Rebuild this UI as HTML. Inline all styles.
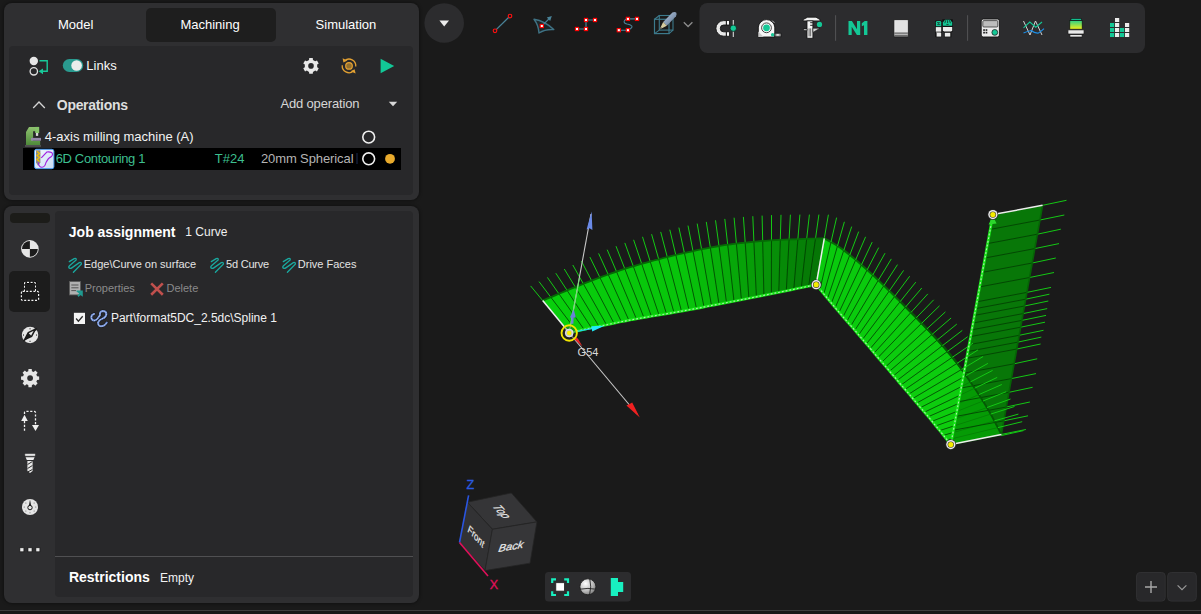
<!DOCTYPE html>
<html><head><meta charset="utf-8"><style>
html,body{margin:0;padding:0;width:1201px;height:614px;overflow:hidden;background:#1a1a1a;}
.t{position:absolute;white-space:pre;line-height:1;font-family:"Liberation Sans", sans-serif;}
.b{position:absolute;}
svg{position:absolute;left:0;top:0;}
</style></head><body>
<div class="b" style="left:4px;top:3px;width:414.5px;height:197px;background:#2f2f31;border-radius:8px;box-shadow:0 0 3px 1px rgba(0,0,0,0.35)"></div><div class="b" style="left:146px;top:8px;width:130px;height:34px;background:#1e1e1e;border-radius:5px;"></div><div class="b" style="left:9px;top:46px;width:404px;height:149px;background:#28282a;border-radius:4px;"></div><div class="b" style="left:4px;top:206px;width:414.5px;height:397px;background:#2f2f31;border-radius:8px;box-shadow:0 0 3px 1px rgba(0,0,0,0.35)"></div><div class="b" style="left:55px;top:211px;width:358px;height:386px;background:#28282a;border-radius:4px;"></div><div class="b" style="left:10px;top:213px;width:40px;height:10px;background:#1c1c19;border-radius:4px;"></div><div class="b" style="left:9px;top:271px;width:41px;height:41px;background:#1c1c1c;border-radius:5px;"></div><div class="b" style="left:0px;top:610px;width:1201px;height:1px;background:#3c3c3c;border-radius:0px;"></div><div class="b" style="left:0px;top:611px;width:1201px;height:3px;background:#161616;border-radius:0px;"></div><div class="t" style="left:57.9px;top:18.00px;font-size:13px;font-weight:400;color:#ffffff;">Model</div><div class="t" style="left:180.4px;top:18.00px;font-size:13px;font-weight:400;color:#ffffff;">Machining</div><div class="t" style="left:315.6px;top:18.00px;font-size:13px;font-weight:400;color:#ffffff;">Simulation</div><div class="t" style="left:86.3px;top:59.30px;font-size:13px;font-weight:400;color:#f8f8f8;">Links</div><div class="t" style="left:56.8px;top:97.95px;font-size:14px;font-weight:700;color:#dedede;letter-spacing:-0.3px">Operations</div><div class="t" style="left:280.4px;top:96.90px;font-size:13px;font-weight:400;color:#d6d6d6;letter-spacing:-0.15px">Add operation</div><div class="t" style="left:44.8px;top:129.80px;font-size:13px;font-weight:400;color:#f2f2f2;">4-axis milling machine (A)</div><div class="b" style="left:23px;top:148px;width:378px;height:22px;background:#000000;border-radius:0px;"></div><div class="t" style="left:55.7px;top:151.50px;font-size:13px;font-weight:400;color:#3dbf8f;letter-spacing:-0.35px">6D Contouring 1</div><div class="t" style="left:214.8px;top:151.50px;font-size:13px;font-weight:400;color:#3dbf8f;">T#24</div><div class="t" style="left:260.9px;top:151.50px;font-size:13px;font-weight:400;color:#b4b4b4;letter-spacing:-0.1px">20mm Spherical</div><div class="t" style="left:68.8px;top:225.05px;font-size:14px;font-weight:700;color:#ffffff;">Job assignment</div><div class="t" style="left:185.3px;top:226.04px;font-size:12px;font-weight:400;color:#f0f0f0;">1 Curve</div><div class="t" style="left:83.7px;top:259.09px;font-size:11px;font-weight:400;color:#e4e4e4;">Edge\Curve on surface</div><div class="t" style="left:226.0px;top:259.09px;font-size:11px;font-weight:400;color:#e4e4e4;letter-spacing:-0.2px">5d Curve</div><div class="t" style="left:297.8px;top:259.09px;font-size:11px;font-weight:400;color:#e4e4e4;">Drive Faces</div><div class="t" style="left:84.7px;top:282.69px;font-size:11px;font-weight:400;color:#8a8a8a;">Properties</div><div class="t" style="left:166.5px;top:282.69px;font-size:11px;font-weight:400;color:#8a8a8a;">Delete</div><div class="t" style="left:110.9px;top:311.94px;font-size:12px;font-weight:400;color:#f2f2f2;">Part\format5DC_2.5dc\Spline 1</div><div class="b" style="left:55px;top:556px;width:358px;height:1px;background:#505052;border-radius:0px;"></div><div class="t" style="left:68.9px;top:569.85px;font-size:14px;font-weight:700;color:#ffffff;">Restrictions</div><div class="t" style="left:160.1px;top:571.84px;font-size:12px;font-weight:400;color:#f2f2f2;">Empty</div><svg width="1201" height="614" viewBox="0 0 1201 614"><circle cx="33.8" cy="61" r="4.2" fill="#e6e6e6"/><circle cx="33.8" cy="71.3" r="3.7" fill="none" stroke="#e0e0e0" stroke-width="1.3"/><path d="M39.5,60.7 H47.2 V71.3 H42" fill="none" stroke="#18c99a" stroke-width="1.4"/><path d="M38.6,71.3 L43,68.4 L43,74.2 Z" fill="#18c99a"/><rect x="62.8" y="59" width="20.4" height="13" rx="6.5" fill="#2a9a8f"/><circle cx="76.6" cy="65.5" r="5.3" fill="#ececec"/><path d="M309.03,59.91 L309.24,57.99 L312.76,57.99 L312.97,59.91 L315.20,61.20 L316.97,60.42 L318.73,63.47 L317.17,64.61 L317.17,67.19 L318.73,68.33 L316.97,71.38 L315.20,70.60 L312.97,71.89 L312.76,73.81 L309.24,73.81 L309.03,71.89 L306.80,70.60 L305.03,71.38 L303.27,68.33 L304.83,67.19 L304.83,64.61 L303.27,63.47 L305.03,60.42 L306.80,61.20Z" fill="#e8e8e8"/><circle cx="311" cy="65.9" r="2.8" fill="#28282a"/><path d="M344.63,60.69 A6.8,6.8 0 0 1 355.77,66.49" fill="none" stroke="#e3a132" stroke-width="1.3"/><path d="M353.37,71.11 A6.8,6.8 0 0 1 342.23,65.31" fill="none" stroke="#e3a132" stroke-width="1.3"/><path d="M342.6,58.2 L343.4,62.6 L347.4,60.6 Z" fill="#e3a132"/><path d="M355.6,73.6 L354.6,69.2 L350.6,71.2 Z" fill="#e3a132"/><circle cx="349" cy="65.9" r="3.3" fill="#94702e" stroke="#e3a132" stroke-width="1.2"/><path d="M380.6,58.7 L394.2,66 L380.6,73.3 Z" fill="#12c897"/><path d="M33.2,108 L39,102 L44.8,108" fill="none" stroke="#d4d4d4" stroke-width="1.3"/><path d="M388.8,101.8 L397.2,101.8 L393,106.2 Z" fill="#d8d8d8"/><defs><linearGradient id="mg" x1="0" y1="0" x2="0" y2="1"><stop offset="0" stop-color="#8fc270"/><stop offset="1" stop-color="#4f8a3a"/></linearGradient><linearGradient id="og" x1="0" y1="0" x2="1" y2="1"><stop offset="0" stop-color="#f4f8ff"/><stop offset="1" stop-color="#c8dcf4"/></linearGradient></defs><rect x="25" y="145.2" width="16" height="1.5" fill="#5a5a5a"/><path d="M29,126.9 H39.1 V133 H35.4 V131.2 H33.1 V140.7 H40.2 V144.9 H26 V132.1 Z" fill="url(#mg)"/><rect x="35.4" y="126.9" width="3.7" height="6.1" fill="#86c46a"/><rect x="35.9" y="133" width="2.3" height="2.9" fill="#d8d8d8"/><rect x="31" y="137.9" width="10" height="2.8" fill="#9488a8"/><rect x="34.5" y="149.3" width="19.4" height="19.4" rx="2" fill="url(#og)" stroke="#4a9cf0" stroke-width="1"/><path d="M36,150.3 H40.4 V162.5 L38.2,166 L36,162.5 Z" fill="#8a8a8a"/><path d="M37,151.5 L39.6,153.5 L37,155.5 L39.6,157.5 L37,159.5 L39.6,161.5" fill="none" stroke="#f0c000" stroke-width="1.2"/><path d="M38.3,162.5 Q39,167.5 42,167.3 Q45,167 46,162.5 Q48,158 51.5,156.5 Q53.5,154 51.5,152.5 Q49.5,151.5 46.8,152 L41.3,157.8" fill="none" stroke="#a020e0" stroke-width="1.1"/><circle cx="368.7" cy="137.1" r="5.9" fill="none" stroke="#f0f0f0" stroke-width="1.6"/><circle cx="368.7" cy="158.8" r="5.9" fill="none" stroke="#f0f0f0" stroke-width="1.6"/><circle cx="390" cy="158.8" r="4.9" fill="#e8aa2c"/><rect x="356.5" y="153" width="1" height="11" fill="#1a2a50"/><circle cx="29.9" cy="248.9" r="8.8" fill="#e6e6e6"/><path d="M29.9,248.9 V241 A7.9,7.9 0 0 0 22,248.9 Z" fill="#1b1b1b"/><path d="M29.9,248.9 V256.8 A7.9,7.9 0 0 0 37.8,248.9 Z" fill="#1b1b1b"/><path d="M24.5,291.4 V283.6 Q24.5,282.4 25.7,282.4 H34.3 Q35.5,282.4 35.5,283.6 V291.4" fill="none" stroke="#000" stroke-width="2.6" stroke-dasharray="2 1.6"/><path d="M24.5,291.4 V283.6 Q24.5,282.4 25.7,282.4 H34.3 Q35.5,282.4 35.5,283.6 V291.4" fill="none" stroke="#f4f4f4" stroke-width="1.2" stroke-dasharray="2 1.6"/><rect x="21.4" y="291.4" width="17.2" height="9" rx="1.2" fill="none" stroke="#f4f4f4" stroke-width="1.2" stroke-dasharray="2 1.6"/><circle cx="30.05" cy="335.05" r="8.2" fill="#e6e6e6"/><path d="M23.4,341.2 L36.8,328.5" stroke="#1b1b1b" stroke-width="1.4"/><path d="M24.6,339.6 L28.3,332.7 L35.4,329.2 L31.7,336.2 Z" fill="#e6e6e6" stroke="#1b1b1b" stroke-width="1.5" stroke-linejoin="round"/><path d="M24.6,339.6 L28.3,332.7 L31.7,336.2 Z" fill="#1b1b1b"/><path d="M29.3,328.8 H30.8 M29.3,341.3 H30.8 M23.5,334.3 V335.8 M36.6,334.3 V335.8" stroke="#444" stroke-width="0.9"/><path d="M28.27,371.14 L28.48,369.04 L31.72,369.04 L31.93,371.14 L33.73,371.88 L35.35,370.55 L37.65,372.85 L36.32,374.47 L37.06,376.27 L39.16,376.48 L39.16,379.72 L37.06,379.93 L36.32,381.73 L37.65,383.35 L35.35,385.65 L33.73,384.32 L31.93,385.06 L31.72,387.16 L28.48,387.16 L28.27,385.06 L26.47,384.32 L24.85,385.65 L22.55,383.35 L23.88,381.73 L23.14,379.93 L21.04,379.72 L21.04,376.48 L23.14,376.27 L23.88,374.47 L22.55,372.85 L24.85,370.55 L26.47,371.88Z" fill="#e6e6e6"/><circle cx="30.1" cy="378.1" r="2.9" fill="#2f2f31"/><path d="M24.5,421 V431" fill="none" stroke="#f0f0f0" stroke-width="1.3" stroke-dasharray="2.2 1.6"/><path d="M21.2,421 L24.5,414.8 L27.8,421 Z" fill="#f0f0f0"/><path d="M24.5,414 V412.6 Q24.5,411.4 25.7,411.4 H34.3 Q35.5,411.4 35.5,412.6 V425" fill="none" stroke="#f0f0f0" stroke-width="1.3" stroke-dasharray="2.2 1.6"/><path d="M32,425 L35.5,431 L39,425 Z" fill="#f0f0f0"/><rect x="24.8" y="453.6" width="10.6" height="2.6" rx="0.6" fill="#f0f0f0" stroke="#111" stroke-width="0.5"/><path d="M25.6,457.2 H34.6 L33.4,460 H26.8 Z" fill="#f0f0f0"/><path d="M27.4,461 H32.6 V471 L30,473 L27.4,471 Z" fill="#e8e8e8"/><path d="M27.6,464.5 L32.4,461.5 M27.6,468.5 L32.4,465.5 M27.6,472 L32.4,469.5" stroke="#2a2a2a" stroke-width="1"/><circle cx="30" cy="507" r="8" fill="#e6e6e6"/><path d="M28.6,507 L30,499.5 L31.4,507 Z" fill="#1b1b1b"/><circle cx="30" cy="507.6" r="2.2" fill="#e6e6e6" stroke="#1b1b1b" stroke-width="1"/><circle cx="34.10" cy="502.90" r="0.5" fill="#555"/><circle cx="35.80" cy="507.00" r="0.5" fill="#555"/><circle cx="34.10" cy="511.10" r="0.5" fill="#555"/><circle cx="30.00" cy="512.80" r="0.5" fill="#555"/><circle cx="25.90" cy="511.10" r="0.5" fill="#555"/><circle cx="24.20" cy="507.00" r="0.5" fill="#555"/><circle cx="25.90" cy="502.90" r="0.5" fill="#555"/><rect x="19.9" y="547.8" width="4" height="4" fill="#ececec" stroke="#111" stroke-width="0.6"/><rect x="28.0" y="547.8" width="4" height="4" fill="#ececec" stroke="#111" stroke-width="0.6"/><rect x="35.9" y="547.8" width="4" height="4" fill="#ececec" stroke="#111" stroke-width="0.6"/><path transform="translate(0.0,0.0)" d="M69.3,261.6 L74.2,258.6 Q76.5,257.8 76.2,260 L69.5,265.8 Q67.8,267.6 70,268.4 Q70.8,268.6 71.8,267.9 L79.3,262.6 Q81.8,262 81.3,264.2 L73.4,272.2" fill="none" stroke="#1aa9a0" stroke-width="1.3" stroke-linecap="round"/><path transform="translate(142.0,0.0)" d="M69.3,261.6 L74.2,258.6 Q76.5,257.8 76.2,260 L69.5,265.8 Q67.8,267.6 70,268.4 Q70.8,268.6 71.8,267.9 L79.3,262.6 Q81.8,262 81.3,264.2 L73.4,272.2" fill="none" stroke="#1aa9a0" stroke-width="1.3" stroke-linecap="round"/><path transform="translate(214.0,0.0)" d="M69.3,261.6 L74.2,258.6 Q76.5,257.8 76.2,260 L69.5,265.8 Q67.8,267.6 70,268.4 Q70.8,268.6 71.8,267.9 L79.3,262.6 Q81.8,262 81.3,264.2 L73.4,272.2" fill="none" stroke="#1aa9a0" stroke-width="1.3" stroke-linecap="round"/><rect x="69.5" y="281.5" width="11" height="13.4" fill="#b0b0b0" stroke="#5a5a5a" stroke-width="0.8"/><path d="M71.3,285 H78.5 M71.3,287.8 H78.5 M71.3,290.6 H76" stroke="#555" stroke-width="1"/><path d="M76.5,290.5 H82.8 V296.8 L80.4,295 L78.6,297 L77.4,295.6 L79.2,293.6 L76.5,291.6 Z" fill="#1f9a90"/><path d="M151.2,283.4 L162.8,294.8 M162.8,283.4 L151.2,294.8" stroke="#c0504d" stroke-width="2.6"/><rect x="73.9" y="312.8" width="11.1" height="11.2" fill="#f4f4f4"/><path d="M76.1,318.5 L78.4,321.2 L82.7,316.3" fill="none" stroke="#2a2a2a" stroke-width="1.3"/><path d="M94.2,313.9 Q91.2,314.6 91.3,317.6 Q91.8,320.8 94.5,320.5 Q96.5,320 97.6,318.5 L99.9,315.2 Q99.6,311.4 102.7,311.1 Q106.3,311.2 106.4,314.2 Q106,317.6 102.5,318.6 Q99.2,319.6 98.1,322.4 Q97.9,326.1 100.9,326.3 Q104.6,326.3 106.8,322.6" fill="none" stroke="#151515" stroke-width="3" stroke-linecap="round"/><path d="M94.2,313.9 Q91.2,314.6 91.3,317.6 Q91.8,320.8 94.5,320.5 Q96.5,320 97.6,318.5 L99.9,315.2 Q99.6,311.4 102.7,311.1 Q106.3,311.2 106.4,314.2 Q106,317.6 102.5,318.6 Q99.2,319.6 98.1,322.4 Q97.9,326.1 100.9,326.3 Q104.6,326.3 106.8,322.6" fill="none" stroke="#6f8fd8" stroke-width="2" stroke-linecap="round"/><path d="M94.2,313.9 Q91.2,314.6 91.3,317.6 Q91.8,320.8 94.5,320.5 Q96.5,320 97.6,318.5 L99.9,315.2 Q99.6,311.4 102.7,311.1 Q106.3,311.2 106.4,314.2 Q106,317.6 102.5,318.6 Q99.2,319.6 98.1,322.4 Q97.9,326.1 100.9,326.3 Q104.6,326.3 106.8,322.6" fill="none" stroke="#ffffff" stroke-width="0.9" stroke-dasharray="0.8 1.1" opacity="0.85"/></svg><svg width="1201" height="614" viewBox="0 0 1201 614"><circle cx="444.2" cy="23" r="19.8" fill="#2c2c2e"/><path d="M439.4,20.6 L449,20.6 L444.2,26.4 Z" fill="#ececec"/><path d="M496.2,29.6 L508.8,17.2" stroke="#4a8398" stroke-width="1.3"/><circle cx="495" cy="30.8" r="1.8" fill="none" stroke="#ff1010" stroke-width="1.15"/><circle cx="510" cy="16" r="1.8" fill="none" stroke="#ff1010" stroke-width="1.15"/><path d="M534,19.2 Q545,21 553.8,29.5 Q545,29 539,33 Q538.5,25 534,19.2 Z" fill="#1e2629" stroke="#3f7284" stroke-width="1.4" stroke-linejoin="round"/><path d="M541.8,26 L550,17.8" stroke="#4a8398" stroke-width="1.2"/><path d="M551.8,16 L546.8,17.6 L550.2,21 Z" fill="#4a8398"/><rect x="540.2" y="24.4" width="3.2" height="3.2" fill="#ffffff" stroke="#ff0000" stroke-width="1.1"/><path d="M577,29 H586 V20 H595" fill="none" stroke="#4a8398" stroke-width="1.2"/><rect x="575.4" y="27.4" width="3.2" height="3.2" fill="#ffffff" stroke="#ff0000" stroke-width="1.1"/><rect x="584.4" y="27.4" width="3.2" height="3.2" fill="#ffffff" stroke="#ff0000" stroke-width="1.1"/><rect x="584.4" y="18.4" width="3.2" height="3.2" fill="#ffffff" stroke="#ff0000" stroke-width="1.1"/><rect x="593.4" y="18.4" width="3.2" height="3.2" fill="#ffffff" stroke="#ff0000" stroke-width="1.1"/><path d="M618.8,30.2 H627.9 Q633,27.5 631.8,26 Q630.5,24.5 627,24 Q623,23 624.5,20.5 Q625.5,19 627.9,18.9 H637" fill="none" stroke="#4a8398" stroke-width="1.1"/><rect x="617.2" y="28.6" width="3.2" height="3.2" fill="#ffffff" stroke="#ff0000" stroke-width="1.1"/><rect x="626.3" y="28.6" width="3.2" height="3.2" fill="#ffffff" stroke="#ff0000" stroke-width="1.1"/><rect x="626.3" y="17.3" width="3.2" height="3.2" fill="#ffffff" stroke="#ff0000" stroke-width="1.1"/><rect x="635.4" y="17.3" width="3.2" height="3.2" fill="#ffffff" stroke="#ff0000" stroke-width="1.1"/><rect x="654.5" y="19.3" width="14.5" height="14.3" fill="none" stroke="#3c7a8c" stroke-width="1.2"/><rect x="659.3" y="15.5" width="13.7" height="14.6" fill="none" stroke="#3c7a8c" stroke-width="1.1"/><path d="M654.5,19.3 L659.3,15.5 M669,19.3 L673,15.5 M654.5,33.6 L659.3,30.1 M669,33.6 L673,30.1" stroke="#3c7a8c" stroke-width="1.1"/><defs><linearGradient id="pg" x1="0" y1="0" x2="1" y2="1"><stop offset="0" stop-color="#b8c8dc"/><stop offset="0.5" stop-color="#8a9eb8"/><stop offset="1" stop-color="#56687e"/></linearGradient></defs><path d="M663.2,22.1 L672.4,12.6 Q674.6,11.2 676.2,12.6 Q677.2,14.4 676,16.2 L666.8,25.7 Z" fill="url(#pg)"/><path d="M663.2,22.1 L666.8,25.7 L659.5,29.5 Z" fill="#d6ccA0"/><path d="M661,27 L659.6,29.4 L662,28.2 Z" fill="#444"/><path d="M683.8,22.3 L688.1,26.5 L692.4,22.3" fill="none" stroke="#8c8c8c" stroke-width="1.3"/><rect x="699.5" y="3" width="445.5" height="50" rx="8" fill="#2c2c2e"/><path d="M726.3,20.6 H723.7 A7.8,7.8 0 0 0 723.7,36.2 H726.3 V31.8 H723.7 A3.4,3.4 0 0 1 723.7,25 H726.3 Z" fill="#e8e8e8" stroke="#111" stroke-width="0.9"/><rect x="726.6" y="20.6" width="2.8" height="4.4" fill="#fafafa" stroke="#111" stroke-width="0.8"/><rect x="726.6" y="31.8" width="2.8" height="4.4" fill="#fafafa" stroke="#111" stroke-width="0.8"/><path d="M733.3,20 V37" stroke="#d8d8d8" stroke-width="1.1"/><circle cx="733.3" cy="28.2" r="3.2" fill="#14c896" stroke="#111" stroke-width="0.7"/><path d="M758.3,37 V27 A8.3,8.3 0 0 1 774.8,27 V37 Z" fill="#f6f6f6" stroke="#111" stroke-width="0.9"/><path d="M758.3,37 V31.6 L763.8,37 Z" fill="#c8c8c8"/><path d="M772.2,20.6 L774.4,22.8" stroke="#bbb" stroke-width="1"/><circle cx="766.5" cy="27.8" r="4.9" fill="none" stroke="#333" stroke-width="0.9"/><circle cx="766.5" cy="27.8" r="3.4" fill="#14c896"/><rect x="775" y="33.2" width="6" height="3.6" fill="#9a9a9a" stroke="#111" stroke-width="0.6"/><rect x="776.6" y="34.2" width="2.2" height="1.4" fill="#eee"/><circle cx="772.6" cy="34.8" r="1.7" fill="#14c896"/><path d="M803,20.9 L803.4,19.4 L807.6,17.2 H816 L820,19.6 V20.9 Z" fill="#f0f0f0" stroke="#111" stroke-width="0.8" stroke-linejoin="round"/><rect x="807" y="20.9" width="5.9" height="17.3" fill="#f4f4f4" stroke="#111" stroke-width="0.8"/><path d="M810.2,22.7 H812.9 M810.2,25.3 H812.9" stroke="#111" stroke-width="0.9"/><path d="M803.2,28.9 H807 V30.6 H804 Z" fill="#dcdcdc" stroke="#111" stroke-width="0.6"/><path d="M812.9,28.2 H820 L812.9,32.4 Z" fill="#d4d4d4" stroke="#111" stroke-width="0.6" stroke-linejoin="round"/><path d="M809.1,28.4 V36.4 M810.7,28.4 V36.4" stroke="#222" stroke-width="0.7"/><circle cx="819.5" cy="24.4" r="2.6" fill="#14c896"/><rect x="835" y="15.2" width="1.1" height="25.6" fill="#4f4f51"/><rect x="967" y="15.2" width="1.1" height="25.6" fill="#4f4f51"/><path d="M848.5,35.1 V20.9 H851.9 L857,29.2 V20.9 H860.2 V35.1 H856.9 L851.7,26.8 V35.1 Z" fill="#14c896"/><path d="M864,35.1 V25.2 L861.8,26.3 V23.3 L864.7,20.9 H867.4 V35.1 Z" fill="#14c896"/><rect x="893.9" y="19.7" width="14.4" height="17.1" rx="0.8" fill="#f4f4f4" stroke="#111" stroke-width="0.8"/><rect x="895.2" y="21" width="11.8" height="11.2" fill="#e2e2e2"/><path d="M894.4,33.1 H907.8 M894.4,35.2 H907.8" stroke="#1a1a1a" stroke-width="0.9"/><rect x="935.2" y="20.4" width="6.6" height="16.8" rx="0.8" fill="#111"/><path d="M935.9,26.2 V22.2 Q935.9,20.9 937.4,20.9 H939.8 Q941.2,20.9 941.2,22.2 V26.2 Z" fill="#14c896"/><path d="M937,22.6 H939.6 L937.6,24.6 H940.2" fill="none" stroke="#1a3a30" stroke-width="0.8"/><rect x="935.8" y="27.1" width="5.4" height="4.6" fill="#ececec"/><rect x="936.2" y="31.6" width="4.6" height="1.2" fill="#9a9a9a"/><rect x="936.6" y="32.9" width="4.6" height="3.7" fill="#ececec"/><path d="M942.3,19.2 H952.8 V31.4 L951.4,32.3 V37.2 H944.2 V32.3 L942.3,31.4 Z" fill="#111"/><path d="M942.9,25.8 V22.5 L945,19.8 H950.2 L952.2,22.5 V25.8 Z" fill="#14c896"/><path d="M945.8,20.2 L944.8,23.2 M947.6,20.2 V23 M949.4,20.2 L950.4,23.2 M946.4,24.4 H948.6" stroke="#112a22" stroke-width="0.8"/><path d="M942.9,26.9 H952.2 V30.8 L951,31.6 H944.2 L942.9,30.8 Z" fill="#ececec"/><rect x="944.8" y="32.8" width="5.5" height="3.8" fill="#ececec"/><rect x="981.2" y="19" width="18.2" height="18" rx="2" fill="#ececec" stroke="#111" stroke-width="0.9"/><rect x="982.8" y="20.6" width="15" height="6.4" rx="1" fill="#bdbdbd" stroke="#222" stroke-width="0.7"/><rect x="983.2" y="29.2" width="1.7" height="1.7" fill="#222"/><rect x="985.6" y="29.2" width="1.7" height="1.7" fill="#222"/><rect x="983.2" y="31.8" width="1.7" height="1.7" fill="#222"/><rect x="985.6" y="31.8" width="1.7" height="1.7" fill="#222"/><circle cx="994.8" cy="32.4" r="2.9" fill="#14c896" stroke="#222" stroke-width="0.8"/><path d="M1023.5,21 L1030,35 L1035.5,21 L1042,35" fill="none" stroke="#d4d4d4" stroke-width="1"/><path d="M1023.5,27.8 L1029.8,22 L1035.8,27.2 L1042,22" fill="none" stroke="#14c896" stroke-width="1.1"/><path d="M1023.5,33 Q1027,31.5 1031,30.5 Q1035,33.5 1038.5,33 Q1041.5,31 1044,28.6" fill="none" stroke="#1c8fe8" stroke-width="1.2"/><defs><linearGradient id="yg" x1="0" y1="0" x2="0" y2="1"><stop offset="0" stop-color="#2ccf86"/><stop offset="1" stop-color="#f2ee1a"/></linearGradient></defs><rect x="1071" y="18.6" width="10.2" height="1.6" fill="#14c896" stroke="#111" stroke-width="0.5"/><rect x="1069.8" y="20.6" width="12.4" height="8.6" fill="url(#yg)" stroke="#111" stroke-width="0.7"/><rect x="1067.9" y="29.8" width="16.2" height="4.3" rx="0.8" fill="#eaeaea" stroke="#111" stroke-width="0.8"/><rect x="1069.9" y="34.7" width="12.2" height="2.3" fill="#f2f2f2" stroke="#111" stroke-width="0.7"/><rect x="1110" y="23" width="4.2" height="4" fill="#14c896"/><rect x="1110" y="28" width="4.2" height="4" fill="#14c896"/><rect x="1110" y="33" width="4.2" height="4" fill="#14c896"/><rect x="1115" y="18" width="4.2" height="4" fill="#ececec"/><rect x="1115" y="23" width="4.2" height="4" fill="#ececec"/><rect x="1115" y="28" width="4.2" height="4" fill="#ececec"/><rect x="1115" y="33" width="4.2" height="4" fill="#ececec"/><rect x="1120" y="28" width="4.2" height="4" fill="#14c896"/><rect x="1120" y="33" width="4.2" height="4" fill="#14c896"/><rect x="1125" y="23" width="4.2" height="4" fill="#ececec"/><rect x="1125" y="28" width="4.2" height="4" fill="#ececec"/><rect x="1125" y="33" width="4.2" height="4" fill="#ececec"/><rect x="545" y="572" width="86" height="29.6" rx="3.5" fill="#2c2c2e"/><path d="M552.2,583 V579.3 H556 M564.2,579.3 H568 V583 M568,591.3 V595 H564.2 M556,595 H552.2 V591.3" fill="none" stroke="#18f0c0" stroke-width="2.2"/><rect x="555.8" y="582.7" width="8.6" height="8.4" fill="#ffffff" stroke="#222" stroke-width="0.8"/><defs><radialGradient id="sg" cx="0.35" cy="0.3" r="0.8"><stop offset="0" stop-color="#ffffff"/><stop offset="0.6" stop-color="#b8b8b8"/><stop offset="1" stop-color="#707070"/></radialGradient></defs><circle cx="587.9" cy="586.8" r="8" fill="url(#sg)" stroke="#1a1a1a" stroke-width="0.8"/><path d="M580,589.2 Q588,587.6 595.8,589.2 M589.8,579 Q591.8,586.8 589.6,594.6" fill="none" stroke="#222" stroke-width="0.9"/><path d="M610.8,577.9 H618 V582 H623.2 V592 H618 V596 H610.8 Z" fill="#18f0c0"/><rect x="1136.6" y="572.5" width="28.6" height="28.6" rx="3.5" fill="#28282a" stroke="#303032" stroke-width="1"/><rect x="1167.7" y="572.5" width="28.6" height="28.6" rx="3.5" fill="#28282a" stroke="#303032" stroke-width="1"/><path d="M1145,587 H1157 M1151,581 V593" stroke="#a8a8a8" stroke-width="1.4"/><path d="M1177.6,585.4 L1182,589.6 L1186.4,585.4" fill="none" stroke="#999" stroke-width="1.2"/></svg><svg width="1201" height="614" viewBox="0 0 1201 614"><polygon points="569.2,332.8 542.7,300.6 550.8,297.2 576.6,331.1" fill="#08cf0c" stroke="#08cf0c" stroke-width="0.5"/><polygon points="576.6,331.1 550.8,297.2 558.9,293.8 584.1,329.5" fill="#08ce0c" stroke="#08ce0c" stroke-width="0.5"/><polygon points="584.1,329.5 558.9,293.8 567.1,290.4 591.5,327.9" fill="#08ce0c" stroke="#08ce0c" stroke-width="0.5"/><polygon points="591.5,327.9 567.1,290.4 575.3,287.1 599.0,326.4" fill="#08cd0c" stroke="#08cd0c" stroke-width="0.5"/><polygon points="599.0,326.4 575.3,287.1 583.4,283.9 606.5,324.8" fill="#08cc0c" stroke="#08cc0c" stroke-width="0.5"/><polygon points="606.5,324.8 583.4,283.9 591.6,280.7 614.0,323.3" fill="#08cc0c" stroke="#08cc0c" stroke-width="0.5"/><polygon points="614.0,323.3 591.6,280.7 599.9,277.5 621.4,321.8" fill="#08cb0c" stroke="#08cb0c" stroke-width="0.5"/><polygon points="621.4,321.8 599.9,277.5 608.2,274.5 628.9,320.3" fill="#08ca0c" stroke="#08ca0c" stroke-width="0.5"/><polygon points="628.9,320.3 608.2,274.5 616.5,271.6 636.4,318.9" fill="#08ca0c" stroke="#08ca0c" stroke-width="0.5"/><polygon points="636.4,318.9 616.5,271.6 624.8,268.8 643.9,317.6" fill="#08c90b" stroke="#08c90b" stroke-width="0.5"/><polygon points="643.9,317.6 624.8,268.8 633.3,266.3 651.4,316.3" fill="#08c80b" stroke="#08c80b" stroke-width="0.5"/><polygon points="651.4,316.3 633.3,266.3 641.7,263.8 659.0,315.0" fill="#08c70b" stroke="#08c70b" stroke-width="0.5"/><polygon points="659.0,315.0 641.7,263.8 650.2,261.5 666.5,313.8" fill="#08c70b" stroke="#08c70b" stroke-width="0.5"/><polygon points="666.5,313.8 650.2,261.5 658.7,259.2 674.0,312.5" fill="#08c60b" stroke="#08c60b" stroke-width="0.5"/><polygon points="674.0,312.5 658.7,259.2 667.3,257.1 681.5,311.2" fill="#08c50b" stroke="#08c50b" stroke-width="0.5"/><polygon points="681.5,311.2 667.3,257.1 675.8,255.0 689.0,309.9" fill="#08c50b" stroke="#08c50b" stroke-width="0.5"/><polygon points="689.0,309.9 675.8,255.0 684.4,253.0 696.5,308.5" fill="#08c40b" stroke="#08c40b" stroke-width="0.5"/><polygon points="696.5,308.5 684.4,253.0 693.0,251.1 704.0,307.0" fill="#08bf0b" stroke="#08bf0b" stroke-width="0.5"/><polygon points="704.0,307.0 693.0,251.1 701.6,249.3 711.5,305.6" fill="#08ba0a" stroke="#08ba0a" stroke-width="0.5"/><polygon points="711.5,305.6 701.6,249.3 710.3,247.6 719.0,304.1" fill="#08b50a" stroke="#08b50a" stroke-width="0.5"/><polygon points="719.0,304.1 710.3,247.6 719.0,246.0 726.5,302.7" fill="#08b00a" stroke="#08b00a" stroke-width="0.5"/><polygon points="726.5,302.7 719.0,246.0 727.7,244.7 734.0,301.2" fill="#07ac09" stroke="#07ac09" stroke-width="0.5"/><polygon points="734.0,301.2 727.7,244.7 736.4,243.6 741.4,299.8" fill="#07a709" stroke="#07a709" stroke-width="0.5"/><polygon points="741.4,299.8 736.4,243.6 745.2,242.6 748.9,298.3" fill="#07a209" stroke="#07a209" stroke-width="0.5"/><polygon points="748.9,298.3 745.2,242.6 753.9,241.8 756.4,296.9" fill="#079d08" stroke="#079d08" stroke-width="0.5"/><polygon points="756.4,296.9 753.9,241.8 762.7,241.0 763.9,295.4" fill="#079808" stroke="#079808" stroke-width="0.5"/><polygon points="763.9,295.4 762.7,241.0 771.5,240.3 771.4,293.9" fill="#079308" stroke="#079308" stroke-width="0.5"/><polygon points="771.4,293.9 771.5,240.3 780.3,239.8 778.8,292.3" fill="#078e08" stroke="#078e08" stroke-width="0.5"/><polygon points="778.8,292.3 780.3,239.8 789.1,239.5 786.3,290.8" fill="#068a07" stroke="#068a07" stroke-width="0.5"/><polygon points="786.3,290.8 789.1,239.5 797.9,239.1 793.8,289.3" fill="#068507" stroke="#068507" stroke-width="0.5"/><polygon points="793.8,289.3 797.9,239.1 806.7,238.8 801.3,287.8" fill="#068007" stroke="#068007" stroke-width="0.5"/><polygon points="801.3,287.8 806.7,238.8 815.5,238.6 808.7,286.2" fill="#067b06" stroke="#067b06" stroke-width="0.5"/><polygon points="808.7,286.2 815.5,238.6 824.3,238.3 816.2,284.7" fill="#067606" stroke="#067606" stroke-width="0.5"/><line x1="576.6" y1="331.1" x2="550.8" y2="297.2" stroke="#023c02" stroke-width="0.75"/><line x1="584.1" y1="329.5" x2="558.9" y2="293.8" stroke="#023c02" stroke-width="0.75"/><line x1="591.5" y1="327.9" x2="567.1" y2="290.4" stroke="#023c02" stroke-width="0.75"/><line x1="599.0" y1="326.4" x2="575.3" y2="287.1" stroke="#023c02" stroke-width="0.75"/><line x1="606.5" y1="324.8" x2="583.4" y2="283.9" stroke="#023c02" stroke-width="0.75"/><line x1="614.0" y1="323.3" x2="591.6" y2="280.7" stroke="#023c02" stroke-width="0.75"/><line x1="621.4" y1="321.8" x2="599.9" y2="277.5" stroke="#023c02" stroke-width="0.75"/><line x1="628.9" y1="320.3" x2="608.2" y2="274.5" stroke="#023c02" stroke-width="0.75"/><line x1="636.4" y1="318.9" x2="616.5" y2="271.6" stroke="#023c02" stroke-width="0.75"/><line x1="643.9" y1="317.6" x2="624.8" y2="268.8" stroke="#023c02" stroke-width="0.75"/><line x1="651.4" y1="316.3" x2="633.3" y2="266.3" stroke="#023c02" stroke-width="0.75"/><line x1="659.0" y1="315.0" x2="641.7" y2="263.8" stroke="#023c02" stroke-width="0.75"/><line x1="666.5" y1="313.8" x2="650.2" y2="261.5" stroke="#023c02" stroke-width="0.75"/><line x1="674.0" y1="312.5" x2="658.7" y2="259.2" stroke="#023c02" stroke-width="0.75"/><line x1="681.5" y1="311.2" x2="667.3" y2="257.1" stroke="#023c02" stroke-width="0.75"/><line x1="689.0" y1="309.9" x2="675.8" y2="255.0" stroke="#023c02" stroke-width="0.75"/><line x1="696.5" y1="308.5" x2="684.4" y2="253.0" stroke="#023c02" stroke-width="0.75"/><line x1="704.0" y1="307.0" x2="693.0" y2="251.1" stroke="#023c02" stroke-width="0.75"/><line x1="711.5" y1="305.6" x2="701.6" y2="249.3" stroke="#023c02" stroke-width="0.75"/><line x1="719.0" y1="304.1" x2="710.3" y2="247.6" stroke="#023c02" stroke-width="0.75"/><line x1="726.5" y1="302.7" x2="719.0" y2="246.0" stroke="#023c02" stroke-width="0.75"/><line x1="734.0" y1="301.2" x2="727.7" y2="244.7" stroke="#023c02" stroke-width="0.75"/><line x1="741.4" y1="299.8" x2="736.4" y2="243.6" stroke="#023c02" stroke-width="0.75"/><line x1="748.9" y1="298.3" x2="745.2" y2="242.6" stroke="#023c02" stroke-width="0.75"/><line x1="756.4" y1="296.9" x2="753.9" y2="241.8" stroke="#023c02" stroke-width="0.75"/><line x1="763.9" y1="295.4" x2="762.7" y2="241.0" stroke="#023c02" stroke-width="0.75"/><line x1="771.4" y1="293.9" x2="771.5" y2="240.3" stroke="#023c02" stroke-width="0.75"/><line x1="778.8" y1="292.3" x2="780.3" y2="239.8" stroke="#023c02" stroke-width="0.75"/><line x1="786.3" y1="290.8" x2="789.1" y2="239.5" stroke="#023c02" stroke-width="0.75"/><line x1="793.8" y1="289.3" x2="797.9" y2="239.1" stroke="#023c02" stroke-width="0.75"/><line x1="801.3" y1="287.8" x2="806.7" y2="238.8" stroke="#023c02" stroke-width="0.75"/><line x1="808.7" y1="286.2" x2="815.5" y2="238.6" stroke="#023c02" stroke-width="0.75"/><line x1="542.7" y1="300.6" x2="530.6" y2="285.9" stroke="#14c814" stroke-width="1"/><line x1="550.8" y1="297.2" x2="539.0" y2="281.6" stroke="#14c814" stroke-width="1"/><line x1="558.9" y1="293.8" x2="547.4" y2="277.4" stroke="#14c814" stroke-width="1"/><line x1="567.1" y1="290.4" x2="555.8" y2="273.2" stroke="#14c814" stroke-width="1"/><line x1="575.3" y1="287.1" x2="564.3" y2="269.0" stroke="#14c814" stroke-width="1"/><line x1="583.4" y1="283.9" x2="572.8" y2="265.0" stroke="#14c814" stroke-width="1"/><line x1="591.6" y1="280.7" x2="581.4" y2="261.0" stroke="#14c814" stroke-width="1"/><line x1="599.9" y1="277.5" x2="589.9" y2="257.1" stroke="#14c814" stroke-width="1"/><line x1="608.2" y1="274.5" x2="598.6" y2="253.4" stroke="#14c814" stroke-width="1"/><line x1="616.5" y1="271.6" x2="607.2" y2="249.7" stroke="#14c814" stroke-width="1"/><line x1="624.8" y1="268.8" x2="616.0" y2="246.2" stroke="#14c814" stroke-width="1"/><line x1="633.3" y1="266.3" x2="624.8" y2="242.9" stroke="#14c814" stroke-width="1"/><line x1="641.7" y1="263.8" x2="633.6" y2="239.8" stroke="#14c814" stroke-width="1"/><line x1="650.2" y1="261.5" x2="642.5" y2="236.8" stroke="#14c814" stroke-width="1"/><line x1="658.7" y1="259.2" x2="651.6" y2="234.2" stroke="#14c814" stroke-width="1"/><line x1="667.3" y1="257.1" x2="660.7" y2="231.9" stroke="#14c814" stroke-width="1"/><line x1="675.8" y1="255.0" x2="669.8" y2="229.7" stroke="#14c814" stroke-width="1"/><line x1="684.4" y1="253.0" x2="678.9" y2="227.6" stroke="#14c814" stroke-width="1"/><line x1="693.0" y1="251.1" x2="688.0" y2="225.6" stroke="#14c814" stroke-width="1"/><line x1="701.6" y1="249.3" x2="697.2" y2="223.6" stroke="#14c814" stroke-width="1"/><line x1="710.3" y1="247.6" x2="706.3" y2="221.9" stroke="#14c814" stroke-width="1"/><line x1="719.0" y1="246.0" x2="715.5" y2="220.3" stroke="#14c814" stroke-width="1"/><line x1="727.7" y1="244.7" x2="724.8" y2="218.9" stroke="#14c814" stroke-width="1"/><line x1="736.4" y1="243.6" x2="734.1" y2="217.7" stroke="#14c814" stroke-width="1"/><line x1="745.2" y1="242.6" x2="743.4" y2="216.9" stroke="#14c814" stroke-width="1"/><line x1="753.9" y1="241.8" x2="752.8" y2="216.2" stroke="#14c814" stroke-width="1"/><line x1="762.7" y1="241.0" x2="762.1" y2="215.6" stroke="#14c814" stroke-width="1"/><line x1="771.5" y1="240.3" x2="771.5" y2="215.1" stroke="#14c814" stroke-width="1"/><line x1="780.3" y1="239.8" x2="781.0" y2="214.8" stroke="#14c814" stroke-width="1"/><line x1="789.1" y1="239.5" x2="790.4" y2="214.7" stroke="#14c814" stroke-width="1"/><line x1="797.9" y1="239.1" x2="799.9" y2="214.6" stroke="#14c814" stroke-width="1"/><line x1="806.7" y1="238.8" x2="809.4" y2="214.6" stroke="#14c814" stroke-width="1"/><line x1="815.5" y1="238.6" x2="818.9" y2="214.6" stroke="#14c814" stroke-width="1"/><line x1="824.3" y1="238.3" x2="828.4" y2="214.7" stroke="#14c814" stroke-width="1"/><polyline points="542.7,300.6 547.2,298.7 551.8,296.8 556.3,294.9 560.9,293.0 565.4,291.1 570.0,289.2 574.6,287.4 579.1,285.6 583.7,283.7 588.3,281.9 592.9,280.2 597.5,278.4 602.1,276.7 606.8,275.0 611.4,273.4 616.1,271.8 620.7,270.2 625.4,268.7 630.1,267.2 634.8,265.8 639.6,264.4 644.3,263.1 649.1,261.8 653.8,260.5 658.6,259.3 663.4,258.0 668.1,256.8 672.9,255.7 677.7,254.5 682.5,253.4 687.3,252.3 692.1,251.3 697.0,250.2 701.8,249.2 706.6,248.3 711.5,247.3 716.3,246.5 721.2,245.7 726.0,244.9 730.9,244.3 735.8,243.7 740.7,243.1 745.6,242.6 750.5,242.1 755.4,241.6 760.3,241.2 765.2,240.8 770.1,240.4 775.1,240.1 780.0,239.8 784.9,239.6 789.8,239.4 794.8,239.3 799.7,239.1 804.6,238.9 809.5,238.7 814.4,238.6 819.4,238.4 824.3,238.3" fill="none" stroke="#066a06" stroke-width="1.8"/><polyline points="569.2,332.8 575.5,331.4 581.8,330.0 588.1,328.6 594.4,327.3 600.7,326.0 607.1,324.7 613.4,323.4 619.7,322.1 626.0,320.9 632.4,319.6 638.7,318.5 645.1,317.4 651.4,316.3 657.8,315.2 664.2,314.2 670.5,313.1 676.9,312.0 683.2,310.9 689.6,309.7 695.9,308.6 702.3,307.4 708.6,306.1 715.0,304.9 721.3,303.7 727.6,302.5 734.0,301.2 740.3,300.0 746.6,298.8 753.0,297.5 759.3,296.3 765.6,295.0 771.9,293.7 778.3,292.5 784.6,291.2 790.9,289.9 797.2,288.6 803.6,287.3 809.9,286.0 816.2,284.7" fill="none" stroke="#18e818" stroke-width="2.6"/><polyline points="569.2,332.8 575.5,331.4 581.8,330.0 588.1,328.6 594.4,327.3 600.7,326.0 607.1,324.7 613.4,323.4 619.7,322.1 626.0,320.9 632.4,319.6 638.7,318.5 645.1,317.4 651.4,316.3 657.8,315.2 664.2,314.2 670.5,313.1 676.9,312.0 683.2,310.9 689.6,309.7 695.9,308.6 702.3,307.4 708.6,306.1 715.0,304.9 721.3,303.7 727.6,302.5 734.0,301.2 740.3,300.0 746.6,298.8 753.0,297.5 759.3,296.3 765.6,295.0 771.9,293.7 778.3,292.5 784.6,291.2 790.9,289.9 797.2,288.6 803.6,287.3 809.9,286.0 816.2,284.7" fill="none" stroke="#d8e8d8" stroke-width="1.1" stroke-dasharray="1.8 2" stroke-opacity="0.8"/><polygon points="816.2,284.7 824.3,238.3 831.0,242.0 820.0,289.3" fill="#09ca0d" stroke="#09ca0d" stroke-width="0.5"/><polygon points="820.0,289.3 831.0,242.0 837.5,245.9 823.8,293.9" fill="#09ca0d" stroke="#09ca0d" stroke-width="0.5"/><polygon points="823.8,293.9 837.5,245.9 843.8,250.3 827.6,298.5" fill="#09ca0d" stroke="#09ca0d" stroke-width="0.5"/><polygon points="827.6,298.5 843.8,250.3 849.8,255.0 831.4,303.1" fill="#09ca0d" stroke="#09ca0d" stroke-width="0.5"/><polygon points="831.4,303.1 849.8,255.0 855.7,259.8 835.2,307.7" fill="#0aca0d" stroke="#0aca0d" stroke-width="0.5"/><polygon points="835.2,307.7 855.7,259.8 861.5,264.7 839.1,312.2" fill="#0aca0d" stroke="#0aca0d" stroke-width="0.5"/><polygon points="839.1,312.2 861.5,264.7 867.2,269.8 843.0,316.8" fill="#0acb0d" stroke="#0acb0d" stroke-width="0.5"/><polygon points="843.0,316.8 867.2,269.8 872.8,275.0 846.9,321.3" fill="#0acb0d" stroke="#0acb0d" stroke-width="0.5"/><polygon points="846.9,321.3 872.8,275.0 878.3,280.3 850.9,325.8" fill="#0acb0d" stroke="#0acb0d" stroke-width="0.5"/><polygon points="850.9,325.8 878.3,280.3 883.9,285.6 854.8,330.3" fill="#0acb0d" stroke="#0acb0d" stroke-width="0.5"/><polygon points="854.8,330.3 883.9,285.6 889.3,290.9 858.7,334.8" fill="#0acb0d" stroke="#0acb0d" stroke-width="0.5"/><polygon points="858.7,334.8 889.3,290.9 894.8,296.2 862.5,339.4" fill="#0bcb0d" stroke="#0bcb0d" stroke-width="0.5"/><polygon points="862.5,339.4 894.8,296.2 900.2,301.6 866.4,343.9" fill="#0bcb0d" stroke="#0bcb0d" stroke-width="0.5"/><polygon points="866.4,343.9 900.2,301.6 905.6,307.0 870.3,348.5" fill="#0bcb0d" stroke="#0bcb0d" stroke-width="0.5"/><polygon points="870.3,348.5 905.6,307.0 911.0,312.4 874.2,353.0" fill="#0bcb0d" stroke="#0bcb0d" stroke-width="0.5"/><polygon points="874.2,353.0 911.0,312.4 916.3,317.8 878.0,357.6" fill="#0bcb0d" stroke="#0bcb0d" stroke-width="0.5"/><polygon points="878.0,357.6 916.3,317.8 921.6,323.3 881.9,362.1" fill="#0bcb0d" stroke="#0bcb0d" stroke-width="0.5"/><polygon points="881.9,362.1 921.6,323.3 927.0,328.8 885.8,366.7" fill="#0ccc0e" stroke="#0ccc0e" stroke-width="0.5"/><polygon points="885.8,366.7 927.0,328.8 932.2,334.3 889.6,371.2" fill="#0ccc0e" stroke="#0ccc0e" stroke-width="0.5"/><polygon points="889.6,371.2 932.2,334.3 937.4,339.9 893.5,375.8" fill="#0ccc0e" stroke="#0ccc0e" stroke-width="0.5"/><polygon points="893.5,375.8 937.4,339.9 942.5,345.6 897.4,380.3" fill="#0ccc0e" stroke="#0ccc0e" stroke-width="0.5"/><polygon points="897.4,380.3 942.5,345.6 947.5,351.4 901.2,384.9" fill="#0ccc0e" stroke="#0ccc0e" stroke-width="0.5"/><polygon points="901.2,384.9 947.5,351.4 952.3,357.3 905.1,389.4" fill="#0ccc0e" stroke="#0ccc0e" stroke-width="0.5"/><polygon points="905.1,389.4 952.3,357.3 957.1,363.3 909.0,394.0" fill="#0ccc0e" stroke="#0ccc0e" stroke-width="0.5"/><polygon points="909.0,394.0 957.1,363.3 961.6,369.4 912.8,398.5" fill="#0dcc0e" stroke="#0dcc0e" stroke-width="0.5"/><polygon points="912.8,398.5 961.6,369.4 966.1,375.6 916.7,403.1" fill="#0dcc0e" stroke="#0dcc0e" stroke-width="0.5"/><polygon points="916.7,403.1 966.1,375.6 970.4,381.9 920.6,407.6" fill="#0dcc0e" stroke="#0dcc0e" stroke-width="0.5"/><polygon points="920.6,407.6 970.4,381.9 974.7,388.2 924.4,412.2" fill="#0dcc0e" stroke="#0dcc0e" stroke-width="0.5"/><polygon points="924.4,412.2 974.7,388.2 978.9,394.6 928.3,416.7" fill="#0dcc0e" stroke="#0dcc0e" stroke-width="0.5"/><polygon points="928.3,416.7 978.9,394.6 983.0,401.0 932.1,421.3" fill="#0dcd0e" stroke="#0dcd0e" stroke-width="0.5"/><polygon points="932.1,421.3 983.0,401.0 987.0,407.5 935.9,425.9" fill="#0dcd0e" stroke="#0dcd0e" stroke-width="0.5"/><polygon points="935.9,425.9 987.0,407.5 990.7,414.1 939.6,430.6" fill="#0ecd0e" stroke="#0ecd0e" stroke-width="0.5"/><polygon points="939.6,430.6 990.7,414.1 994.3,420.9 943.4,435.3" fill="#0ecd0e" stroke="#0ecd0e" stroke-width="0.5"/><polygon points="943.4,435.3 994.3,420.9 997.9,427.6 947.1,439.9" fill="#0ecd0e" stroke="#0ecd0e" stroke-width="0.5"/><polygon points="947.1,439.9 997.9,427.6 1001.4,434.4 950.8,444.6" fill="#0ecd0e" stroke="#0ecd0e" stroke-width="0.5"/><line x1="820.0" y1="289.3" x2="831.0" y2="242.0" stroke="#023c02" stroke-width="0.75"/><line x1="823.8" y1="293.9" x2="837.5" y2="245.9" stroke="#023c02" stroke-width="0.75"/><line x1="827.6" y1="298.5" x2="843.8" y2="250.3" stroke="#023c02" stroke-width="0.75"/><line x1="831.4" y1="303.1" x2="849.8" y2="255.0" stroke="#023c02" stroke-width="0.75"/><line x1="835.2" y1="307.7" x2="855.7" y2="259.8" stroke="#023c02" stroke-width="0.75"/><line x1="839.1" y1="312.2" x2="861.5" y2="264.7" stroke="#023c02" stroke-width="0.75"/><line x1="843.0" y1="316.8" x2="867.2" y2="269.8" stroke="#023c02" stroke-width="0.75"/><line x1="846.9" y1="321.3" x2="872.8" y2="275.0" stroke="#023c02" stroke-width="0.75"/><line x1="850.9" y1="325.8" x2="878.3" y2="280.3" stroke="#023c02" stroke-width="0.75"/><line x1="854.8" y1="330.3" x2="883.9" y2="285.6" stroke="#023c02" stroke-width="0.75"/><line x1="858.7" y1="334.8" x2="889.3" y2="290.9" stroke="#023c02" stroke-width="0.75"/><line x1="862.5" y1="339.4" x2="894.8" y2="296.2" stroke="#023c02" stroke-width="0.75"/><line x1="866.4" y1="343.9" x2="900.2" y2="301.6" stroke="#023c02" stroke-width="0.75"/><line x1="870.3" y1="348.5" x2="905.6" y2="307.0" stroke="#023c02" stroke-width="0.75"/><line x1="874.2" y1="353.0" x2="911.0" y2="312.4" stroke="#023c02" stroke-width="0.75"/><line x1="878.0" y1="357.6" x2="916.3" y2="317.8" stroke="#023c02" stroke-width="0.75"/><line x1="881.9" y1="362.1" x2="921.6" y2="323.3" stroke="#023c02" stroke-width="0.75"/><line x1="885.8" y1="366.7" x2="927.0" y2="328.8" stroke="#023c02" stroke-width="0.75"/><line x1="889.6" y1="371.2" x2="932.2" y2="334.3" stroke="#023c02" stroke-width="0.75"/><line x1="893.5" y1="375.8" x2="937.4" y2="339.9" stroke="#023c02" stroke-width="0.75"/><line x1="897.4" y1="380.3" x2="942.5" y2="345.6" stroke="#023c02" stroke-width="0.75"/><line x1="901.2" y1="384.9" x2="947.5" y2="351.4" stroke="#023c02" stroke-width="0.75"/><line x1="905.1" y1="389.4" x2="952.3" y2="357.3" stroke="#023c02" stroke-width="0.75"/><line x1="909.0" y1="394.0" x2="957.1" y2="363.3" stroke="#023c02" stroke-width="0.75"/><line x1="912.8" y1="398.5" x2="961.6" y2="369.4" stroke="#023c02" stroke-width="0.75"/><line x1="916.7" y1="403.1" x2="966.1" y2="375.6" stroke="#023c02" stroke-width="0.75"/><line x1="920.6" y1="407.6" x2="970.4" y2="381.9" stroke="#023c02" stroke-width="0.75"/><line x1="924.4" y1="412.2" x2="974.7" y2="388.2" stroke="#023c02" stroke-width="0.75"/><line x1="928.3" y1="416.7" x2="978.9" y2="394.6" stroke="#023c02" stroke-width="0.75"/><line x1="932.1" y1="421.3" x2="983.0" y2="401.0" stroke="#023c02" stroke-width="0.75"/><line x1="935.9" y1="425.9" x2="987.0" y2="407.5" stroke="#023c02" stroke-width="0.75"/><line x1="939.6" y1="430.6" x2="990.7" y2="414.1" stroke="#023c02" stroke-width="0.75"/><line x1="943.4" y1="435.3" x2="994.3" y2="420.9" stroke="#023c02" stroke-width="0.75"/><line x1="947.1" y1="439.9" x2="997.9" y2="427.6" stroke="#023c02" stroke-width="0.75"/><polyline points="824.3,238.3 828.3,240.5 832.2,242.7 836.1,245.0 839.9,247.5 843.6,250.1 847.2,252.9 850.7,255.7 854.2,258.5 857.7,261.4 861.1,264.4 864.5,267.4 867.9,270.4 871.2,273.5 874.5,276.6 877.8,279.7 881.1,282.9 884.3,286.0 887.6,289.2 890.8,292.3 894.0,295.5 897.2,298.7 900.5,301.9 903.7,305.1 906.9,308.3 910.1,311.5 913.2,314.7 916.4,317.9 919.6,321.2 922.7,324.4 925.9,327.7 929.0,330.9 932.1,334.2 935.2,337.6 938.3,340.9 941.3,344.3 944.3,347.6 947.2,351.1 950.1,354.6 953.0,358.1 955.8,361.6 958.6,365.2 961.3,368.8 963.9,372.5 966.5,376.2 969.1,379.9 971.6,383.7 974.2,387.4 976.7,391.2 979.2,395.0 981.6,398.8 984.0,402.6 986.4,406.5 988.7,410.4 990.9,414.4 993.0,418.4 995.1,422.4 997.2,426.4 999.3,430.4 1001.4,434.4" fill="none" stroke="#066a06" stroke-width="2"/><polyline points="816.2,284.7 819.6,288.8 823.0,293.0 826.4,297.1 829.8,301.2 833.3,305.4 836.7,309.5 840.2,313.5 843.7,317.6 847.2,321.6 850.8,325.7 854.3,329.7 857.8,333.8 861.2,337.8 864.7,341.9 868.2,346.0 871.7,350.1 875.1,354.2 878.6,358.3 882.1,362.3 885.6,366.4 889.0,370.5 892.5,374.6 896.0,378.7 899.4,382.8 902.9,386.8 906.4,390.9 909.9,395.0 913.3,399.1 916.8,403.2 920.3,407.3 923.7,411.3 927.2,415.4 930.6,419.5 934.0,423.7 937.4,427.9 940.8,432.0 944.1,436.2 947.5,440.4 950.8,444.6" fill="none" stroke="#18e818" stroke-width="2.6"/><polyline points="816.2,284.7 819.6,288.8 823.0,293.0 826.4,297.1 829.8,301.2 833.3,305.4 836.7,309.5 840.2,313.5 843.7,317.6 847.2,321.6 850.8,325.7 854.3,329.7 857.8,333.8 861.2,337.8 864.7,341.9 868.2,346.0 871.7,350.1 875.1,354.2 878.6,358.3 882.1,362.3 885.6,366.4 889.0,370.5 892.5,374.6 896.0,378.7 899.4,382.8 902.9,386.8 906.4,390.9 909.9,395.0 913.3,399.1 916.8,403.2 920.3,407.3 923.7,411.3 927.2,415.4 930.6,419.5 934.0,423.7 937.4,427.9 940.8,432.0 944.1,436.2 947.5,440.4 950.8,444.6" fill="none" stroke="#d8e8d8" stroke-width="1.1" stroke-dasharray="1.8 2" stroke-opacity="0.8"/><polygon points="950.8,444.6 992.9,214.6 1042.6,205.3 1001.4,434.4" fill="#048f04" fill-opacity="0.8"/><line x1="992.9" y1="214.7" x2="1042.6" y2="205.3" stroke="#023c02" stroke-width="0.8"/><line x1="1042.6" y1="205.3" x2="1066.5" y2="200.3" stroke="#14c814" stroke-width="1"/><line x1="990.2" y1="229.4" x2="1040.0" y2="220.0" stroke="#023c02" stroke-width="0.8"/><line x1="1040.0" y1="220.0" x2="1064.3" y2="215.0" stroke="#14c814" stroke-width="1"/><line x1="987.6" y1="243.6" x2="1037.4" y2="234.2" stroke="#023c02" stroke-width="0.8"/><line x1="1037.4" y1="234.2" x2="1060.8" y2="229.2" stroke="#14c814" stroke-width="1"/><line x1="985.0" y1="258.0" x2="1034.8" y2="248.6" stroke="#023c02" stroke-width="0.8"/><line x1="1034.8" y1="248.6" x2="1059.0" y2="243.6" stroke="#14c814" stroke-width="1"/><line x1="982.3" y1="272.4" x2="1032.2" y2="263.0" stroke="#023c02" stroke-width="0.8"/><line x1="1032.2" y1="263.0" x2="1055.8" y2="258.0" stroke="#14c814" stroke-width="1"/><line x1="979.7" y1="286.9" x2="1029.6" y2="277.5" stroke="#023c02" stroke-width="0.8"/><line x1="1029.6" y1="277.5" x2="1054.0" y2="272.5" stroke="#14c814" stroke-width="1"/><line x1="976.9" y1="301.8" x2="1026.9" y2="292.4" stroke="#023c02" stroke-width="0.8"/><line x1="1026.9" y1="292.4" x2="1051.0" y2="287.4" stroke="#14c814" stroke-width="1"/><line x1="975.7" y1="308.6" x2="1025.7" y2="299.2" stroke="#023c02" stroke-width="0.8"/><line x1="1025.7" y1="299.2" x2="1049.4" y2="294.2" stroke="#14c814" stroke-width="1"/><line x1="974.4" y1="315.4" x2="1024.5" y2="306.0" stroke="#023c02" stroke-width="0.8"/><line x1="1024.5" y1="306.0" x2="1048.3" y2="301.0" stroke="#14c814" stroke-width="1"/><line x1="973.1" y1="323.0" x2="1023.1" y2="313.6" stroke="#023c02" stroke-width="0.8"/><line x1="1023.1" y1="313.6" x2="1047.2" y2="308.6" stroke="#14c814" stroke-width="1"/><line x1="971.8" y1="329.8" x2="1021.9" y2="320.4" stroke="#023c02" stroke-width="0.8"/><line x1="1021.9" y1="320.4" x2="1046.0" y2="315.4" stroke="#14c814" stroke-width="1"/><line x1="970.6" y1="336.6" x2="1020.7" y2="327.2" stroke="#023c02" stroke-width="0.8"/><line x1="1020.7" y1="327.2" x2="1045.0" y2="322.2" stroke="#14c814" stroke-width="1"/><line x1="969.1" y1="344.7" x2="1019.2" y2="335.3" stroke="#023c02" stroke-width="0.8"/><line x1="1019.2" y1="335.3" x2="1043.5" y2="330.3" stroke="#14c814" stroke-width="1"/><line x1="967.8" y1="351.5" x2="1018.0" y2="342.1" stroke="#023c02" stroke-width="0.8"/><line x1="1018.0" y1="342.1" x2="1041.3" y2="337.1" stroke="#14c814" stroke-width="1"/><line x1="966.6" y1="358.4" x2="1016.8" y2="349.0" stroke="#023c02" stroke-width="0.8"/><line x1="1016.8" y1="349.0" x2="1040.6" y2="344.0" stroke="#14c814" stroke-width="1"/><line x1="963.9" y1="373.2" x2="1014.1" y2="363.8" stroke="#023c02" stroke-width="0.8"/><line x1="1014.1" y1="363.8" x2="1037.2" y2="358.8" stroke="#14c814" stroke-width="1"/><line x1="961.2" y1="388.0" x2="1011.4" y2="378.6" stroke="#023c02" stroke-width="0.8"/><line x1="1011.4" y1="378.6" x2="1036.0" y2="373.6" stroke="#14c814" stroke-width="1"/><line x1="958.7" y1="401.7" x2="1009.0" y2="392.3" stroke="#023c02" stroke-width="0.8"/><line x1="1009.0" y1="392.3" x2="1032.6" y2="387.3" stroke="#14c814" stroke-width="1"/><line x1="956.0" y1="416.4" x2="1006.3" y2="407.0" stroke="#023c02" stroke-width="0.8"/><line x1="1006.3" y1="407.0" x2="1029.9" y2="402.0" stroke="#14c814" stroke-width="1"/><line x1="953.4" y1="430.2" x2="1003.8" y2="420.8" stroke="#023c02" stroke-width="0.8"/><line x1="1003.8" y1="420.8" x2="1028.0" y2="415.8" stroke="#14c814" stroke-width="1"/><line x1="950.7" y1="445.0" x2="1001.2" y2="435.6" stroke="#023c02" stroke-width="0.8"/><line x1="1001.2" y1="435.6" x2="1023.5" y2="430.6" stroke="#14c814" stroke-width="1"/><line x1="1001.4" y1="434.4" x2="1042.6" y2="205.3" stroke="#066406" stroke-width="1.6"/><polyline points="899.4,300.8 901.8,303.2 904.2,305.6 906.5,307.9 908.9,310.3 911.3,312.7 913.7,315.2 916.1,317.6 918.4,320.0 920.8,322.4 923.1,324.8 925.5,327.3 927.8,329.7 930.2,332.1 932.5,334.6 934.8,337.1 937.1,339.6 939.3,342.1 941.6,344.6 943.8,347.1 946.0,349.7 948.2,352.3 950.4,354.9 952.5,357.5 954.6,360.1 956.7,362.8 958.8,365.5 960.8,368.2 962.8,370.9 964.8,373.7 966.7,376.4 968.6,379.2 970.5,382.0 972.4,384.8 974.3,387.6 976.2,390.5 978.0,393.3 979.9,396.1 981.7,398.9 983.5,401.8 985.3,404.7 987.0,407.6 988.7,410.5 990.4,413.5 992.0,416.4 993.6,419.4 995.1,422.4 996.7,425.4 998.3,428.4 999.8,431.4 1001.4,434.4" fill="none" stroke="#055805" stroke-width="1.8"/><line x1="831.0" y1="242.0" x2="836.6" y2="217.6" stroke="#14c814" stroke-width="1"/><line x1="837.5" y1="245.9" x2="844.4" y2="221.8" stroke="#14c814" stroke-width="1"/><line x1="843.8" y1="250.3" x2="851.7" y2="226.6" stroke="#14c814" stroke-width="1"/><line x1="849.8" y1="255.0" x2="858.7" y2="231.6" stroke="#14c814" stroke-width="1"/><line x1="855.7" y1="259.8" x2="865.6" y2="236.8" stroke="#14c814" stroke-width="1"/><line x1="861.5" y1="264.7" x2="872.2" y2="242.1" stroke="#14c814" stroke-width="1"/><line x1="867.2" y1="269.8" x2="878.7" y2="247.6" stroke="#14c814" stroke-width="1"/><line x1="872.8" y1="275.0" x2="885.0" y2="253.2" stroke="#14c814" stroke-width="1"/><line x1="878.3" y1="280.3" x2="891.3" y2="258.9" stroke="#14c814" stroke-width="1"/><line x1="883.9" y1="285.6" x2="897.5" y2="264.6" stroke="#14c814" stroke-width="1"/><line x1="889.3" y1="290.9" x2="903.6" y2="270.4" stroke="#14c814" stroke-width="1"/><line x1="894.8" y1="296.2" x2="909.7" y2="276.2" stroke="#14c814" stroke-width="1"/><line x1="900.2" y1="301.6" x2="915.8" y2="282.1" stroke="#14c814" stroke-width="1"/><line x1="905.6" y1="307.0" x2="921.8" y2="288.0" stroke="#14c814" stroke-width="1"/><line x1="911.0" y1="312.4" x2="927.8" y2="293.9" stroke="#14c814" stroke-width="1"/><line x1="916.3" y1="317.8" x2="933.7" y2="299.8" stroke="#14c814" stroke-width="1"/><line x1="921.6" y1="323.3" x2="939.5" y2="305.8" stroke="#14c814" stroke-width="1"/><line x1="927.0" y1="328.8" x2="945.4" y2="311.9" stroke="#14c814" stroke-width="1"/><line x1="932.2" y1="334.3" x2="951.1" y2="318.0" stroke="#14c814" stroke-width="1"/><line x1="937.4" y1="339.9" x2="956.8" y2="324.1" stroke="#14c814" stroke-width="1"/><line x1="942.5" y1="345.6" x2="962.3" y2="330.4" stroke="#14c814" stroke-width="1"/><line x1="947.5" y1="351.4" x2="967.7" y2="336.7" stroke="#14c814" stroke-width="1"/><line x1="952.3" y1="357.3" x2="973.0" y2="343.2" stroke="#14c814" stroke-width="1"/><line x1="957.1" y1="363.3" x2="978.1" y2="349.8" stroke="#14c814" stroke-width="1"/><line x1="961.6" y1="369.4" x2="983.1" y2="356.5" stroke="#14c814" stroke-width="1"/><line x1="966.1" y1="375.6" x2="987.9" y2="363.4" stroke="#14c814" stroke-width="1"/><line x1="970.4" y1="381.9" x2="992.6" y2="370.4" stroke="#14c814" stroke-width="1"/><line x1="974.7" y1="388.2" x2="997.2" y2="377.4" stroke="#14c814" stroke-width="1"/><line x1="978.9" y1="394.6" x2="1001.8" y2="384.5" stroke="#14c814" stroke-width="1"/><line x1="983.0" y1="401.0" x2="1006.2" y2="391.7" stroke="#14c814" stroke-width="1"/><line x1="987.0" y1="407.5" x2="1010.5" y2="399.0" stroke="#14c814" stroke-width="1"/><line x1="990.7" y1="414.1" x2="1014.5" y2="406.5" stroke="#14c814" stroke-width="1"/><line x1="994.3" y1="420.9" x2="1018.4" y2="414.1" stroke="#14c814" stroke-width="1"/><line x1="997.9" y1="427.6" x2="1022.2" y2="421.7" stroke="#14c814" stroke-width="1"/><line x1="1001.4" y1="434.4" x2="1025.9" y2="429.5" stroke="#14c814" stroke-width="1"/><polyline points="950.8,444.6 992.9,214.6" fill="none" stroke="#18e818" stroke-width="2.6"/><polyline points="950.8,444.6 992.9,214.6" fill="none" stroke="#d8e8d8" stroke-width="1.1" stroke-dasharray="1.8 2" stroke-opacity="0.8"/><path d="M992.8,216 L988.6,224.5 L996.6,223.5 Z" fill="#2cd82c"/><line x1="569.2" y1="332.8" x2="542.7" y2="300.6" stroke="#eeeeee" stroke-width="1.5"/><line x1="816.2" y1="284.7" x2="824.3" y2="238.3" stroke="#eeeeee" stroke-width="1.5"/><line x1="992.9" y1="214.6" x2="1042.6" y2="205.3" stroke="#eeeeee" stroke-width="1.5"/><line x1="950.8" y1="444.6" x2="1001.4" y2="434.4" stroke="#eeeeee" stroke-width="1.5"/><circle cx="816.2" cy="284.7" r="5.3" fill="#2a2a2a"/><circle cx="816.2" cy="284.7" r="4.6" fill="#eeeeee"/><circle cx="816.2" cy="284.7" r="3.2" fill="#3a3a3a"/><circle cx="816.2" cy="284.7" r="2.6" fill="#f4ec00"/><circle cx="950.8" cy="444.6" r="5.3" fill="#2a2a2a"/><circle cx="950.8" cy="444.6" r="4.6" fill="#eeeeee"/><circle cx="950.8" cy="444.6" r="3.2" fill="#3a3a3a"/><circle cx="950.8" cy="444.6" r="2.6" fill="#f4ec00"/><circle cx="992.9" cy="214.6" r="5.3" fill="#2a2a2a"/><circle cx="992.9" cy="214.6" r="4.6" fill="#eeeeee"/><circle cx="992.9" cy="214.6" r="3.2" fill="#3a3a3a"/><circle cx="992.9" cy="214.6" r="2.6" fill="#f4ec00"/><line x1="569.2" y1="333" x2="591" y2="214" stroke="#c8c8c8" stroke-width="1.1"/><line x1="569.6" y1="331" x2="579.4" y2="278" stroke="#70e070" stroke-width="1.1"/><path d="M591.6,211.5 L586.6,229.5 L589.6,228.2 L592.4,230 Z" fill="#6a8ae8"/><line x1="569.2" y1="333" x2="637" y2="414" stroke="#c8c8c8" stroke-width="1.1"/><path d="M639.8,417.4 L626.4,405.4 L629.6,404 L632.2,402.4 Z" fill="#f02020"/><path d="M582.4,346.2 L573.2,338.6 L575.6,336.4 L578.2,339 Z" fill="#e82828"/><path d="M573.8,309.6 L569.8,317.6 L571.4,317.6 L571.2,323.8 L573.4,323.8 L573.6,317.6 L575.8,317.6 Z" fill="#6a80d8"/><path d="M577,331.4 L600,327" stroke="#20d8e8" stroke-width="1.1"/><path d="M604.4,325.8 L591.4,326.2 L592.2,331.6 Z" fill="#20eaf8"/><circle cx="569.2" cy="333" r="7.7" fill="#2a2a2a" fill-opacity="0.35" stroke="#f2e600" stroke-width="1.9"/><circle cx="569.2" cy="333" r="3.9" fill="#c8c8c8" stroke="#f0f0f0" stroke-width="0.8"/><circle cx="569.2" cy="333" r="2.3" fill="#f8f000"/><text x="577.6" y="355.7" font-family="Liberation Sans" font-size="11" fill="#d8d8d8">G54</text><polygon points="467.4,502.2 511.4,492.9 536.9,521.9 492.4,529.3" fill="#353537" stroke="#242424" stroke-width="0.8"/><polygon points="467.4,502.2 492.4,529.3 485.0,570.6 459.5,542.5" fill="#323234" stroke="#242424" stroke-width="0.8"/><polygon points="492.4,529.3 536.9,521.9 530.0,563.2 485.0,570.6" fill="#363638" stroke="#242424" stroke-width="0.8"/><line x1="459.5" y1="542.5" x2="468.6" y2="495.4" stroke="#2a55e0" stroke-width="1.6"/><line x1="459.5" y1="542.5" x2="488" y2="576" stroke="#e0105a" stroke-width="1.6"/><text x="466.6" y="489" font-family="Liberation Sans" font-size="12.5" fill="#2a5ae0" stroke="#2a5ae0" stroke-width="0.3">Z</text><text x="489.8" y="588.5" font-family="Liberation Sans" font-size="12.5" fill="#e0105a" stroke="#e0105a" stroke-width="0.3">X</text><text transform="matrix(0.5000,0.5420,-0.8800,0.1860,502.02,511.57)" text-anchor="middle" y="5.04" font-family="Liberation Sans" font-style="italic" font-size="14" fill="#ececec" stroke="#ececec" stroke-width="0.25">Top</text><text transform="matrix(0.5100,0.5620,-0.1580,0.8060,476.07,536.15)" text-anchor="middle" y="4.68" font-family="Liberation Sans" font-style="italic" font-size="13" fill="#ececec" stroke="#ececec" stroke-width="0.25">Front</text><text transform="matrix(0.8900,-0.1480,-0.1480,0.8260,511.07,546.25)" text-anchor="middle" y="4.54" font-family="Liberation Sans" font-style="italic" font-size="12.6" fill="#ececec" stroke="#ececec" stroke-width="0.25">Back</text></svg>
</body></html>
